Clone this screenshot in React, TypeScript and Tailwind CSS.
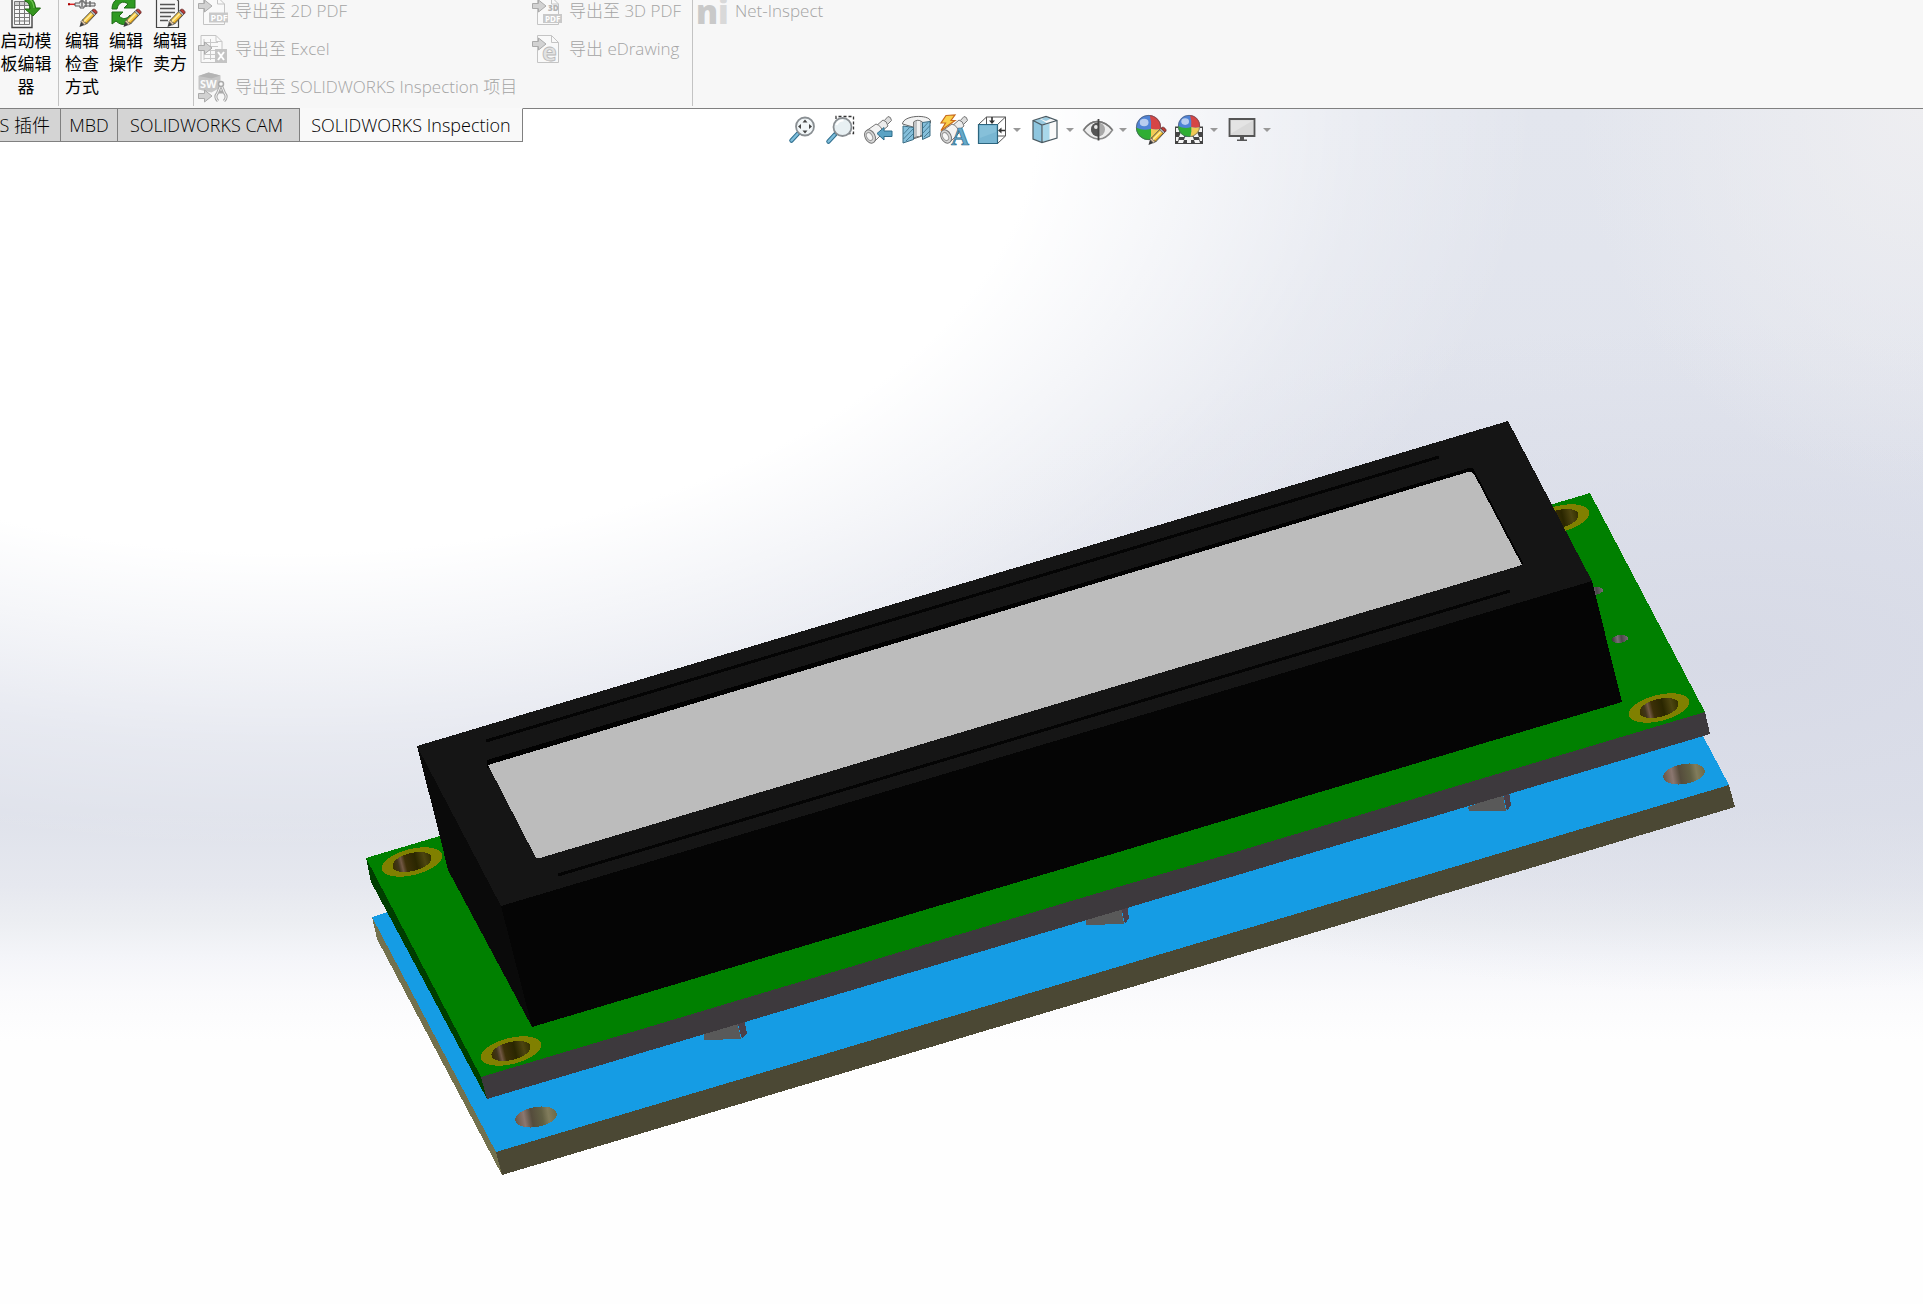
import React from 'react';

type IconProps = { children: React.ReactNode };

const Icon: React.FC<IconProps> = ({ children }) => (
  <svg xmlns="http://www.w3.org/2000/svg" className="h-8 w-8 shrink-0 overflow-visible" viewBox="0 0 32 32" fill="none" aria-hidden="true">
    {children}
  </svg>
);

const Pencil = () => (
  <g>
    <path d="M13.5 31 15 25.5 18.5 29Z" fill="#3c3c3c" />
    <path d="M15 25.5 17 23.5 21 27.5 18.5 29Z" fill="#e8c9a0" stroke="#4a4a4a" strokeWidth="0.7" />
    <path d="M16.5 24 25.5 14.8 29.5 18.5 20.5 28Z" fill="#f6c945" stroke="#4a4a4a" strokeWidth="1" />
    <path d="m18 25.5 9-9.2" stroke="#fff0a8" strokeWidth="1.2" />
    <path d="m20 27 9-9.2" stroke="#c98d1c" strokeWidth="1" />
    <path d="m24.5 15.8 1.5-1.5 4 3.8-1.5 1.5Z" fill="#b9bcc2" stroke="#4a4a4a" strokeWidth="0.7" />
    <path d="m26 14.3 1.2-1q1.2-.6 2.8 1t1 2.8l-1 1Z" fill="#c33b34" stroke="#5a2a2a" strokeWidth="0.8" />
  </g>
);

const TemplateIcon = () => (
  <Icon>
    <path d="M2 1h20v30.5H2Z" fill="#f7f7f7" stroke="#444" strokeWidth="1.4" />
    <path d="M4.5 6h15v3h-15Z" fill="#cfcfcf" />
    <path d="M4.5 5.5h15v23h-15ZM4.5 9.500h15M4.5 13.500h15M4.5 17.500h15M4.5 21.500h15M4.5 25h15M9.5 5.500v23M14.500 5.500v23" stroke="#777" />
    <path d="M15 1.500c6-1 10 3 10.500 10.500h5l-7.500 8-8-7h5c0-4-1.500-7-5-8Z" fill="#35961f" stroke="#1f6611" strokeWidth="1" />
    <path d="M17 3c5 0 6.500 4 7 9" stroke="#6fc451" strokeWidth="1.200" />
  </Icon>
);

const ProbeIcon = () => (
  <Icon>
    <path d="M2 8.300h8" stroke="#d22" strokeWidth="1.500" />
    <path d="M2 7.300h2v2H2Z" fill="#a00" />
    <path d="M9 7h5V5h4v2h11v3H18v2h-4v-2H9Z" fill="#e6e6e6" stroke="#555" />
    <path d="M16 4v7M20 4v7M24 5v6" stroke="#666" strokeWidth="1.400" />
    <Pencil />
  </Icon>
);

const CycleIcon = () => (
  <Icon>
    <path d="M2 13C2 4 9 0 18 2l3 2 4-3v11H14l4-4C13 4 8 7 7 13Z" fill="#2f9a22" stroke="#1d6c15" />
    <path d="M2 16h11l-4 4c4 4 8 3 11-1l4 3c-4 7-12 9-18 3l-4 3Z" fill="#2f9a22" stroke="#1d6c15" />
    <Pencil />
  </Icon>
);

const SellerIcon = () => (
  <Icon>
    <path d="M2.500 1h18l4 4v26.500h-22Z" fill="#f5f5f5" stroke="#444" strokeWidth="1.200" />
    <path d="M6 8.500h15M6 12.500h15M6 16.500h15M6 20.500h11M6 24.500h8" stroke="#555" strokeWidth="1.300" />
    <Pencil />
  </Icon>
);

const GrayArrow: React.FC<{ y: number }> = ({ y }) => (
  <path transform={`translate(0 ${y})`} d="M1.500 3.500h6V0l7.500 6-7.500 6V8.500h-6Z" fill="#d2d2d2" stroke="#aaa" />
);

const Pdf2dIcon = () => (
  <Icon>
    <path d="M6.500 2h14l7 7v20.500h-21Z" fill="#f9f9f9" stroke="#c4c4c4" />
    <path d="M20.500 2v7h7" stroke="#c4c4c4" />
    <GrayArrow y={5} />
    <path d="M12 17.500h19v10H12Z" fill="#c9c9c9" />
    <text x="13.500" y="26" fontFamily="Open Sans" fontSize="9" fontWeight="700" fill="#fff">PDF</text>
  </Icon>
);

const ExcelIcon = () => (
  <Icon>
    <path d="M4 2.500h15l6 6v21H4Z" fill="#f9f9f9" stroke="#c4c4c4" />
    <path d="M19 2.500v6h6M7 9.500h14M7 13.500h14M7 17.500h11M7 21.500h11M7 25.500h11M13.500 6v21M7 6v21" stroke="#c9c9c9" />
    <GrayArrow y={9} />
    <path d="M18 16h12v14H18Z" fill="#c4c4c4" />
    <path d="m21 19 6 8m0-8-6 8" stroke="#fff" strokeWidth="2" />
  </Icon>
);

const ProjectIcon = () => (
  <Icon>
    <path d="m1.500 5 10-3.500 12 3v12l-9 5-13-3Z" fill="#c6c6c6" />
    <path d="m1.500 5 10-3.500 12 3-9 3Z" fill="#b4b4b4" />
    <text x="3" y="17" fontFamily="Open Sans" fontSize="11" fontWeight="700" fill="#fafafa">SW</text>
    <path transform="translate(0 19)" d="M1.500 3.500h6V0l7.500 6-7.500 6V8.500h-6Z" fill="#d2d2d2" stroke="#aaa" />
    <circle cx="24" cy="13" r="2.500" fill="#f7f7f7" stroke="#aaa" strokeWidth="1.500" />
    <path d="m23 16-2.500 6q-3.500 4 .5 8M25 16l2.500 6q3.500 4-.5 8M21.500 21h5" stroke="#aaa" strokeWidth="3" />
    <path d="m23 16-2.500 6q-3.500 4 .5 8M25 16l2.500 6q3.500 4-.5 8" stroke="#f2f2f2" strokeWidth="1" />
  </Icon>
);

const Pdf3dIcon = () => (
  <Icon>
    <path d="M6.500 2h14l7 7v20.500h-21Z" fill="#f9f9f9" stroke="#c4c4c4" />
    <path d="M20.500 2v7h7" stroke="#c4c4c4" />
    <GrayArrow y={5} />
    <text x="17" y="16" fontFamily="Open Sans" fontSize="8" fontWeight="800" fill="#b4b4b4">3D</text>
    <path d="M12 19h19v9H12Z" fill="#c9c9c9" />
    <text x="14" y="27" fontFamily="Open Sans" fontSize="8" fontWeight="700" fill="#fff">PDF</text>
  </Icon>
);

const EDrawingIcon = () => (
  <Icon>
    <path d="M6.500 2.500h14l7 7v20h-21Z" fill="#f9f9f9" stroke="#c4c4c4" />
    <path d="M20.500 2.500v7h7" stroke="#c4c4c4" />
    <text x="11" y="28" fontFamily="Open Sans" fontSize="25" fontWeight="700" fill="#e2e2e2" stroke="#b8b8b8" strokeWidth="0.800">e</text>
    <GrayArrow y={5} />
  </Icon>
);

const NetInspectIcon = () => (
  <Icon>
    <text x="-1" y="29" fontFamily="Open Sans" fontSize="33" fontWeight="800" fill="#c9c9c9">
      n<tspan fill="#d9d9d9">i</tspan>
    </text>
  </Icon>
);

const ZoomFitIcon = () => (
  <Icon>
    <path d="m5.500 26.500 7-7.500" stroke="#2f6f8f" strokeWidth="4.500" strokeLinecap="round" />
    <path d="m5.500 26.500 6-6.500" stroke="#7fbedb" strokeWidth="2.500" strokeLinecap="round" />
    <circle cx="19" cy="12.500" r="9" fill="#f1f6f8" stroke="#8a8f93" strokeWidth="1.800" />
    <path d="m19 5.500 2.500 3h-5ZM19 19.500l2.500-3h-5ZM12 12.500l3-2.500v5ZM26 12.500 23 10v5Z" fill="#444" />
  </Icon>
);

const ZoomAreaIcon = () => (
  <Icon>
    <path d="M12 10V2.500h17.500v17H23" stroke="#333" strokeWidth="1.300" strokeDasharray="3 2" />
    <path d="m4.500 27.500 7-7.500" stroke="#2f6f8f" strokeWidth="4.500" strokeLinecap="round" />
    <path d="m4.500 27.500 6-6.500" stroke="#7fbedb" strokeWidth="2.500" strokeLinecap="round" />
    <circle cx="18.500" cy="13" r="9" fill="#e8f0f3" stroke="#8a8f93" strokeWidth="1.800" />
    <path d="M12.500 11q2-5 7-4.500" stroke="#fff" strokeWidth="2" />
  </Icon>
);

const Telescope = () => (
  <g stroke="#777" strokeWidth="1">
    <path d="M21 8 26 2.500q3 0 3.500 4L24 12Z" fill="#dcdcdc" />
    <path d="m14 12 7-6q4 1 5 6l-7 6Z" fill="#ececec" />
    <path d="m4 17 10-7q6 2 7 9l-9 9Z" fill="#f3f3f3" />
    <ellipse cx="8" cy="22.500" rx="5" ry="7" transform="rotate(-28 8 22.500)" fill="#d8d8d8" />
    <ellipse cx="7.500" cy="22.500" rx="2.800" ry="4.300" transform="rotate(-28 7.500 22.500)" fill="#f6f6f6" stroke="#999" />
  </g>
);

const PreviousViewIcon = () => (
  <Icon>
    <Telescope />
    <path d="m15 19.500 7-6v3.500h8v5.500h-8V26Z" fill="#5ba3c4" stroke="#2d6c8a" />
  </Icon>
);

const SectionIcon = () => (
  <Icon>
    <path d="M2.500 10C3 1 29 0 30.500 7v2L22 12v10l-9 3V13Z" fill="#f2f2f2" stroke="#666" strokeWidth="1" />
    <path d="M13.500 8q4-3.500 9 0v13l-9 3Z" fill="#bfc2c4" stroke="#777" />
    <path d="M17 7h3v15h-3Z" fill="#f0f0f0" />
    <path d="m3 12 10.500 1.500v12L3 29ZM22.500 8.500l7.500-1V22l-7.500 3.500Z" fill="#84bfdb" stroke="#3b6c83" strokeWidth="1" />
    <path d="m3.500 20 6-6.500M3.500 25l9.500-10M6 27l7-7M23 14l5-5.500M23 19l7-7.500M24 23l6-6" stroke="#3b6c83" strokeWidth="0.800" />
  </Icon>
);

const DynamicViewIcon = () => (
  <Icon>
    <Telescope />
    <path d="m8 1.500 9-.5-4 5.500h4L3 16.500 7.500 9H3Z" fill="#fbd04a" stroke="#c86a1c" strokeWidth="1.200" />
    <text x="13" y="31" fontFamily="Liberation Serif" fontSize="25" fontWeight="700" fill="#64a9ca" stroke="#2d6c8a" strokeWidth="0.700">A</text>
  </Icon>
);

const OrientationIcon = () => (
  <Icon>
    <path d="M2.500 10.500 10.500 3h19v19l-8 7.500M10.500 3v8M29.500 3l-8 7.500M29.500 22h-8" stroke="#555" strokeWidth="1" />
    <path d="M2.500 10.500h19v19h-19Z" fill="#78b6d2" stroke="#2c657f" strokeWidth="1.200" />
    <path d="M4 12h16v6L4 24Z" fill="#8fc6dd" opacity=".6" />
    <path d="M16 3v5M29 16.500h-4" stroke="#333" strokeWidth="1.600" />
    <path d="m16 10-3-3.500h6ZM22 16.500l3.500-3v6Z" fill="#333" />
  </Icon>
);

const DisplayStyleIcon = () => (
  <Icon>
    <path d="m4 6.500 13-4 11 4-15 4.500Z" fill="#f8f8f8" />
    <path d="m4.500 6.500 6-1.800 8 4.800-5.500 1.500ZM17 3l5 1.500-5 2.500-5-2Z" fill="#9acbe0" />
    <path d="M4 6.500 13 11v17.500L4 25Z" fill="#8ec6df" />
    <path d="m13 11 15-4.500V24l-15 4.500Z" fill="#fafafa" />
    <path d="m13.500 11.500 7-2V26l-7 2Z" fill="#a9d8ea" />
    <path d="m4 6.500 13-4 11 4V24l-15 4.500L4 25ZM13 11v17.500M4 6.500 13 11l15-4.500" stroke="#4a5a62" strokeWidth="1.200" />
  </Icon>
);

const EyeIcon = () => (
  <Icon>
    <path d="M1.500 16Q8 7 16 7.500T30.500 16Q24 25.500 16 25T1.500 16Z" fill="#ededed" stroke="#8a8a8a" strokeWidth="1.500" />
    <path d="M2 15.500Q8 7 16 7.500T30 15.500" stroke="#777" strokeWidth="1.500" />
    <circle cx="16" cy="15.500" r="7" fill="#a8a8a8" />
    <path d="M16 8.500a7 7 0 0 0 0 14Z" fill="#555" />
    <circle cx="14" cy="13" r="2" fill="#e8e8e8" />
    <path d="M16.500 5v21.500" stroke="#444" strokeWidth="1.800" />
  </Icon>
);

const Ball: React.FC<{ cx: number; cy: number; r: number }> = ({ cx, cy, r }) => (
  <g transform={`translate(${cx} ${cy}) scale(${r})`}>
    <circle r="1" fill="#4f83d6" />
    <path d="M.1-1A1 1 0 0 1 1 .1Q.6.2.2.1Q.25-.5.1-1Z" fill="#d64545" />
    <path d="M1 .1A1 1 0 0 1 .1 1Q.25.6.2.1Q.6.2 1 .1Z" fill="#f1ca55" />
    <path d="M-1 0A1 1 0 0 0 .1 1Q.25.6.2.1Q-.4.3-1 0Z" fill="#2fae33" />
    <ellipse cx="-.35" cy="-.4" rx=".35" ry=".3" fill="#fff" opacity=".6" />
    <circle r=".97" stroke="#555" strokeWidth=".07" opacity=".7" />
  </g>
);

const AppearanceIcon = () => (
  <Icon>
    <Ball cx={13.5} cy={13.5} r={12.5} />
    <Pencil />
  </Icon>
);

const SceneIcon = () => (
  <Icon>
    <path d="M2 12.500h28v17.500H2Z" fill="#444" />
    <path d="M3 14h4l-1 4H3ZM25 14h4v4h-3ZM8 18h4l-1 5H6ZM20 18h4l2 5h-5ZM12 23h8l1 3H11ZM3 23h3l-1 4H3ZM26 23h3v4h-2ZM6 26h5l-1 3H5ZM21 26h5l1 3h-5ZM14 26h4v3h-4Z" fill="#f4f4f4" />
    <Ball cx={16} cy={12} r={11} />
  </Icon>
);

const MonitorIcon = () => (
  <Icon>
    <path d="M3.500 5h25v17h-25Z" fill="#d9d9d9" stroke="#555" strokeWidth="1.800" />
    <path d="M5 6.500h22l-22 13Z" fill="#e4e4e4" />
    <path d="M14 23h4v2.500h3V27H11v-1.500h3Z" fill="#555" />
  </Icon>
);

const editActions = [
  { icon: <ProbeIcon />, lines: ['编辑', '检查', '方式'] },
  { icon: <CycleIcon />, lines: ['编辑', '操作'] },
  { icon: <SellerIcon />, lines: ['编辑', '卖方'] },
];

const exportActions = [
  { icon: <Pdf2dIcon />, label: '导出至 2D PDF' },
  { icon: <ExcelIcon />, label: '导出至 Excel' },
  { icon: <ProjectIcon />, label: '导出至 SOLIDWORKS Inspection 项目' },
];

const export3dActions = [
  { icon: <Pdf3dIcon />, label: '导出至 3D PDF' },
  { icon: <EDrawingIcon />, label: '导出 eDrawing' },
];

const viewTools = [
  { name: '整屏显示全图', icon: <ZoomFitIcon /> },
  { name: '局部放大', icon: <ZoomAreaIcon /> },
  { name: '上一视图', icon: <PreviousViewIcon /> },
  { name: '剖面视图', icon: <SectionIcon /> },
  { name: '动态注解视图', icon: <DynamicViewIcon /> },
  { name: '视图定向', icon: <OrientationIcon />, menu: true },
  { name: '显示样式', icon: <DisplayStyleIcon />, menu: true },
  { name: '隐藏/显示项目', icon: <EyeIcon />, menu: true },
  { name: '编辑外观', icon: <AppearanceIcon /> },
  { name: '应用布景', icon: <SceneIcon />, menu: true },
  { name: '视图设置', icon: <MonitorIcon />, menu: true },
];

const RibbonButton: React.FC<{ icon: React.ReactNode; lines: string[] }> = ({ icon, lines }) => (
  <button type="button" className="flex flex-col items-center text-[17px] leading-[23px] font-normal text-black">
    <span className="mb-px">{icon}</span>
    {lines.map((line) => (
      <span key={line} className="whitespace-nowrap">{line}</span>
    ))}
  </button>
);

const ExportButton: React.FC<{ icon: React.ReactNode; label: string }> = ({ icon, label }) => (
  <button type="button" disabled className="flex h-[38px] items-center gap-1.5 text-[17px] whitespace-nowrap text-[#a4a4a4]">
    {icon}
    {label}
  </button>
);

const Ribbon = () => (
  <header className="flex h-[108px] shrink-0 overflow-hidden bg-[#f7f7f7]">
    <div className="-mt-1 grid w-[58px] items-start pr-1.5">
      <RibbonButton icon={<TemplateIcon />} lines={['启动模', '板编辑', '器']} />
    </div>
    <div className="mb-0.5 w-px bg-[#c3c3c3]" />
    <div className="-mt-1 grid w-[134px] grid-cols-3 items-start px-px">
      {editActions.map((action) => (
        <RibbonButton key={action.lines.join('')} {...action} />
      ))}
    </div>
    <div className="mb-0.5 w-px bg-[#c3c3c3]" />
    <div className="-mt-2 w-[337px] pl-[3px]">
      {exportActions.map((action) => (
        <ExportButton key={action.label} {...action} />
      ))}
    </div>
    <div className="-mt-2 w-[161px]">
      {export3dActions.map((action) => (
        <ExportButton key={action.label} {...action} />
      ))}
    </div>
    <div className="mb-0.5 w-px bg-[#c3c3c3]" />
    <div className="-mt-2 pl-1">
      <ExportButton icon={<NetInspectIcon />} label="Net-Inspect" />
    </div>
  </header>
);

const Tabs = () => (
  <div role="tablist" className="flex h-[34px] text-[18px] whitespace-nowrap text-black">
    <button type="button" role="tab" className="flex w-[61px] items-center justify-end overflow-hidden border border-l-0 border-[#808080] bg-[#d4d4d4] pr-2.5">S 插件</button>
    <button type="button" role="tab" className="w-[57px] border-y border-r border-[#808080] bg-[#d4d4d4]">MBD</button>
    <button type="button" role="tab" className="w-[182px] border-y border-r border-[#808080] bg-[#d4d4d4] pr-1">SOLIDWORKS CAM</button>
    <button type="button" role="tab" aria-selected="true" className="w-[223px] border border-l-0 border-[#808080] border-t-[#f9f9f9] bg-[#f9f9f9]">SOLIDWORKS Inspection</button>
  </div>
);

const ViewToolbar = () => (
  <div role="toolbar" className="ml-[263px] flex gap-1.5 pt-[5px]">
    {viewTools.map((tool) => (
      <button key={tool.name} type="button" aria-label={tool.name} className="flex items-center gap-[3px]">
        {tool.icon}
        {tool.menu && (
          <svg className="w-3" viewBox="0 0 12 12" aria-hidden="true">
            <path d="M2 4h8L6 8Z" fill="#999" />
          </svg>
        )}
      </button>
    ))}
  </div>
);

const platedHoles = [
  [412, 862],
  [511, 1051],
  [1559, 519],
  [1659, 708],
];

const baseHoles = [
  [536, 1117],
  [1684, 774],
];

const Model = () => (
  <svg className="absolute inset-0 h-full w-full" viewBox="0 108 1923 1196" shapeRendering="crispEdges" role="img" aria-label="LCD 1602">
    <defs>
      <linearGradient id="bore">
        <stop offset="0" stopColor="#3a3000" />
        <stop offset=".15" stopColor="#41351a" />
        <stop offset=".24" stopColor="#725844" />
        <stop offset=".34" stopColor="#3d3008" />
        <stop offset=".6" stopColor="#2a2600" />
        <stop offset=".82" stopColor="#4d4510" />
        <stop offset="1" stopColor="#333000" />
      </linearGradient>
      <linearGradient id="baseBore">
        <stop offset="0" stopColor="#685747" />
        <stop offset=".22" stopColor="#8b7770" />
        <stop offset=".4" stopColor="#554c3c" />
        <stop offset=".65" stopColor="#626044" />
        <stop offset=".8" stopColor="#817c5c" />
        <stop offset="1" stopColor="#6c6a48" />
      </linearGradient>
      <linearGradient id="pinBore">
        <stop offset="0" stopColor="#3b3639" />
        <stop offset=".35" stopColor="#777077" />
        <stop offset=".6" stopColor="#4b464a" />
        <stop offset="1" stopColor="#756e74" />
      </linearGradient>
    </defs>

    {/* base board */}
    <path d="M372 917 377 939 502 1175 496 1152Z" fill="#73714e" />
    <path d="m496 1152 6 23 1233-368-6-22Z" fill="#4b4834" />
    <path d="M372 917 400 908 1690 730l13 6 26 49-1233 367Z" fill="#159ce4" />
    {baseHoles.map(([x, y]) => (
      <ellipse key={x} cx={x} cy={y} rx="21" ry="10" transform={`rotate(-10 ${x} ${y})`} fill="url(#baseBore)" />
    ))}

    {/* spacers between the boards */}
    <path d="m704 1030v10l37-1-4-18ZM1086 918v7l38-1-3-17ZM1468 807l1 4h37l-3-17Z" fill="#595959" />
    <path d="m737 1021 7-2 3 14-5 6ZM1121 907l6-2 2 13-4 6ZM1503 794l6-2 2 13-4 6Z" fill="#4b404a" />

    {/* display board */}
    <path d="m366 858 5 24 116 217-6-22Z" fill="#003d00" />
    <path d="m481 1077 6 22 1223-365-5-22Z" fill="#3d393d" />
    <path d="M366 858 1590 493l115 219-1224 365Z" fill="#008000" />
    {platedHoles.map(([x, y]) => (
      <g key={x} transform={`translate(${x} ${y}) rotate(-14)`}>
        <ellipse rx="31" ry="13" fill="#808000" />
        <ellipse rx="20" ry="9" fill="url(#bore)" />
      </g>
    ))}
    <ellipse cx="1620" cy="639" rx="8" ry="4" transform="rotate(-8 1620 639)" fill="url(#pinBore)" />
    <ellipse cx="1595" cy="591" rx="8" ry="4" transform="rotate(-8 1595 591)" fill="url(#pinBore)" />

    {/* bezel */}
    <path d="m417 746 84 160 31 121-84-157-8-33Z" fill="#0a0a0a" />
    <path d="m501 906 1091-325 30 121-1090 325Z" fill="#050505" />
    <path d="M417 746 1508 421l84 160L501 906Z" fill="#151515" />
    <path d="m487 760 982-292q4-1 5 2l49 93-2 3L487 768Z" fill="#020202" />
    <path d="M488 765 1468 472q4-1 6 2l48 91-982 293q-3 1-5-2Z" fill="#bcbcbc" />
    <path d="m486 741 953-284M558 875l952-284" stroke="#040404" strokeWidth="3" />
  </svg>
);

const App: React.FC = () => {
  return (
    <div className="flex min-h-screen flex-col overflow-hidden font-['Open_Sans','Noto_Sans_CJK_SC',sans-serif] font-light">
      <Ribbon />
      <main className="relative flex-1 bg-[radial-gradient(ellipse_65%_62%_at_15%_0%,#fff_60%,#ffffffb0_71%,#ffffff40_86%,#ffffff00_100%),radial-gradient(ellipse_18%_32%_at_100%_0%,#eeeef1_0%,#eeeef100_100%),radial-gradient(ellipse_45%_28%_at_90%_46%,#d7dae6_0%,#d7dae600_100%),linear-gradient(180deg,#e3e6ee_0%,#dfe2ec_50%,#dfe2eb_59%,#e6e8ef_65%,#eceef2_68%,#f4f5f9_71%,#fafafc_74%,#fefefe_78%)]">
        <Model />
        <div className="relative flex items-start">
          <Tabs />
          <div className="flex-1 border-t border-[#808080]">
            <ViewToolbar />
          </div>
        </div>
      </main>
    </div>
  );
};

export default App;
